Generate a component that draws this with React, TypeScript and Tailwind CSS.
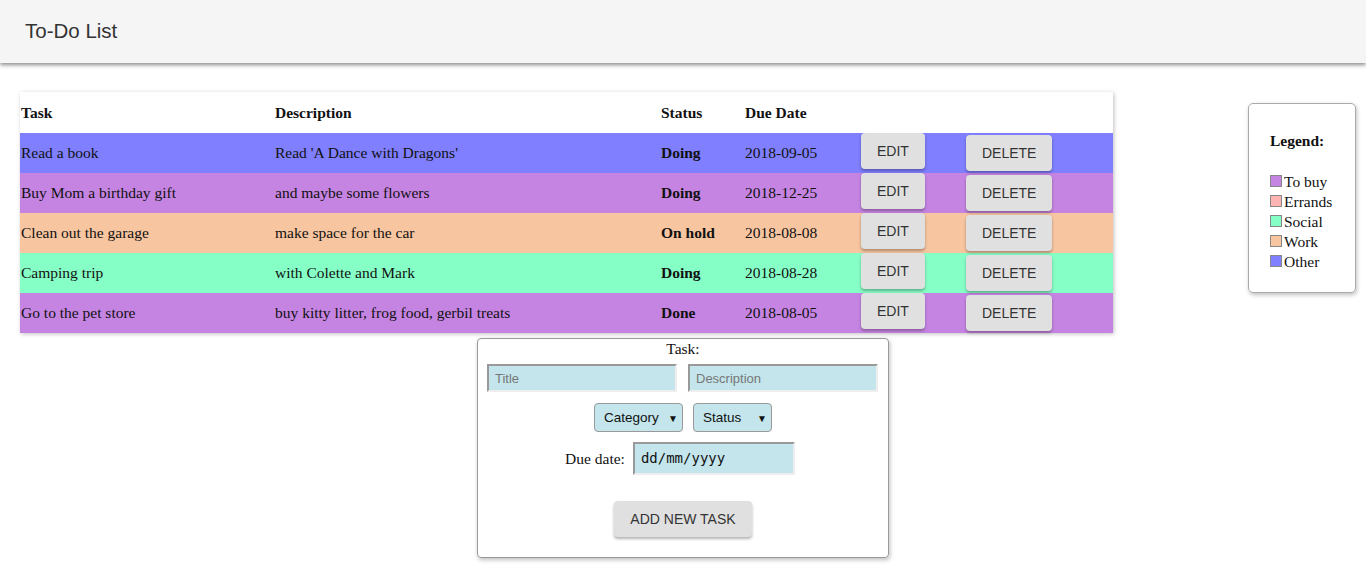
const tasks = [
  { title: 'Read a book', desc: "Read 'A Dance with Dragons'", status: 'Doing', due: '2018-09-05', color: 'bg-[#7f7fff]' },
  { title: 'Buy Mom a birthday gift', desc: 'and maybe some flowers', status: 'Doing', due: '2018-12-25', color: 'bg-[#c584e2]' },
  { title: 'Clean out the garage', desc: 'make space for the car', status: 'On hold', due: '2018-08-08', color: 'bg-[#f7c5a0]' },
  { title: 'Camping trip', desc: 'with Colette and Mark', status: 'Doing', due: '2018-08-28', color: 'bg-[#86ffc7]' },
  { title: 'Go to the pet store', desc: 'buy kitty litter, frog food, gerbil treats', status: 'Done', due: '2018-08-05', color: 'bg-[#c584e2]' }
]

const legend = [
  { label: 'To buy', color: 'bg-[#c584e2]' },
  { label: 'Errands', color: 'bg-[#ffb4b4]' },
  { label: 'Social', color: 'bg-[#86ffc7]' },
  { label: 'Work', color: 'bg-[#f7c5a0]' },
  { label: 'Other', color: 'bg-[#7f7fff]' }
]

const serif = "font-['Liberation_Serif',serif]"
const sans = "font-['Liberation_Sans',Arial,sans-serif]"
const btn = `${sans} h-[36px] rounded-[4px] bg-[#e0e0e0] px-[16px] text-[14px] text-[#333] uppercase shadow-[0_2px_3px_rgba(0,0,0,0.3)]`
const field = 'bg-[#c3e5eb]'
const inset = 'border-2 border-t-[#999] border-l-[#999] border-b-[#eee] border-r-[#eee]'

export default function App() {
  return (
    <div className={`${serif} min-h-[579px] bg-white text-[#111]`}>
      <header className="flex h-[63px] items-center bg-[#f5f5f5] pl-[25px] shadow-[0_2px_4px_rgba(0,0,0,0.45)]">
        <h1 className={`${sans} text-[20.5px] text-[#333]`}>To-Do List</h1>
      </header>

      <div className="flex items-start justify-between pl-[20px] pr-[10px] pt-[29px]">
        <div className="w-[1093px] bg-white shadow-[1px_1px_4px_rgba(0,0,0,0.25)]">
          <div className="flex h-[41px] items-center text-[15.5px] font-bold">
            <div className="w-[255px] pl-[1px]">Task</div>
            <div className="w-[386px]">Description</div>
            <div className="w-[84px]">Status</div>
            <div className="w-[116px]">Due Date</div>
          </div>
          {tasks.map((t) => (
            <div key={t.title} className={`flex h-[40px] items-center text-[15.5px] ${t.color}`}>
              <div className="w-[255px] pl-[1px]">{t.title}</div>
              <div className="w-[386px]">{t.desc}</div>
              <div className="w-[84px] font-bold">{t.status}</div>
              <div className="w-[116px]">{t.due}</div>
              <div className="flex h-full w-[105px] items-start">
                <button type="button" className={btn}>Edit</button>
              </div>
              <div className="flex h-full w-[147px] items-start pt-[2px]">
                <button type="button" className={btn}>Delete</button>
              </div>
            </div>
          ))}
        </div>

        <div className="mt-[11px] flex h-[190px] w-[108px] flex-col rounded-[5px] border border-[#aaa] pl-[21px] pt-[25px] text-[15.5px] shadow-[1px_2px_4px_rgba(0,0,0,0.25)]">
          <div className="font-bold">Legend:</div>
          <div className="mt-[19px] flex flex-col">
            {legend.map((l) => (
              <div key={l.label} className="flex h-[20px] items-center gap-[2px]">
                <span className={`h-[12px] w-[12px] border border-[#888] ${l.color}`} />
                <span>{l.label}</span>
              </div>
            ))}
          </div>
        </div>
      </div>

      <div className="mx-auto mt-[5px] flex w-[412px] flex-col items-center rounded-[4px] border border-[#999] px-[9px] pb-[20px] shadow-[1px_2px_4px_rgba(0,0,0,0.25)]">
        <div className="text-[15.5px] leading-[20px]">Task:</div>
        <div className="mt-[5px] flex w-full gap-[11px]">
          <input
            placeholder="Title"
            className={`${sans} ${field} ${inset} h-[28px] w-[190px] px-[6px] text-[13px] placeholder:text-[#777] outline-none`}
          />
          <input
            placeholder="Description"
            className={`${sans} ${field} ${inset} h-[28px] w-[190px] px-[6px] text-[13px] placeholder:text-[#777] outline-none`}
          />
        </div>
        <div className="mt-[11px] flex gap-[10px]">
          <div className={`${sans} ${field} flex h-[29px] w-[89px] items-center justify-between rounded-[4px] border border-[#999] pl-[9px] pr-[4px] pt-[1px] text-[13.5px] text-[#111]`}>
            <span>Category</span>
            <span className="text-[10px]">▼</span>
          </div>
          <div className={`${sans} ${field} flex h-[29px] w-[79px] items-center justify-between rounded-[4px] border border-[#999] pl-[9px] pr-[4px] pt-[1px] text-[13.5px] text-[#111]`}>
            <span>Status</span>
            <span className="text-[10px]">▼</span>
          </div>
        </div>
        <div className="mt-[10px] flex items-center gap-[8px] pr-[6px]">
          <span className="text-[15.5px]">Due date:</span>
          <div className={`${field} ${inset} flex h-[33px] w-[162px] items-center pl-[6px] font-['DejaVu_Sans_Mono',monospace] text-[14px] text-[#111]`}>
            dd/mm/yyyy
          </div>
        </div>
        <button type="button" className={`${btn} mt-[26px] w-[138px] px-0`}>Add new task</button>
      </div>
    </div>
  )
}
